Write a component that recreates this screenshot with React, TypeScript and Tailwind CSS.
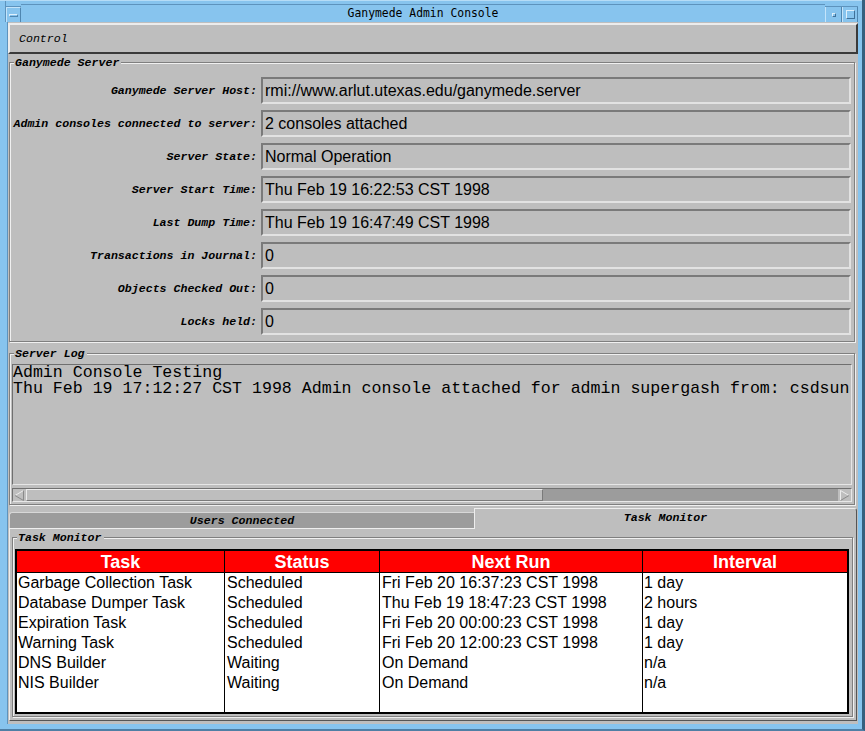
import React from "react";

const rows: [string, string][] = [
  ["Ganymede Server Host:", "rmi://www.arlut.utexas.edu/ganymede.server"],
  ["Admin consoles connected to server:", "2 consoles attached"],
  ["Server State:", "Normal Operation"],
  ["Server Start Time:", "Thu Feb 19 16:22:53 CST 1998"],
  ["Last Dump Time:", "Thu Feb 19 16:47:49 CST 1998"],
  ["Transactions in Journal:", "0"],
  ["Objects Checked Out:", "0"],
  ["Locks held:", "0"],
];

const tasks: string[][] = [
  ["Garbage Collection Task", "Scheduled", "Fri Feb 20 16:37:23 CST 1998", "1 day"],
  ["Database Dumper Task", "Scheduled", "Thu Feb 19 18:47:23 CST 1998", "2 hours"],
  ["Expiration Task", "Scheduled", "Fri Feb 20 00:00:23 CST 1998", "1 day"],
  ["Warning Task", "Scheduled", "Fri Feb 20 12:00:23 CST 1998", "1 day"],
  ["DNS Builder", "Waiting", "On Demand", "n/a"],
  ["NIS Builder", "Waiting", "On Demand", "n/a"],
];

const cols = [
  { title: "Task", w: "w-[208px] border-r border-black", pad: "pl-[1px]" },
  { title: "Status", w: "w-[155px] border-r border-black", pad: "pl-[2px]" },
  { title: "Next Run", w: "w-[263px] border-r border-black", pad: "pl-[2px]" },
  { title: "Interval", w: "flex-1", pad: "pl-[1px]" },
];

function Field({ label, value }: { label: string; value: string }) {
  return (
    <div className="flex items-center h-[27px]">
      <div className="w-[247px] text-right font-['Liberation_Mono',monospace] italic font-bold text-[11.6px] leading-[13px] text-black whitespace-nowrap">
        {label}
      </div>
      <div className="ml-[4px] flex-1 h-[27px] border-2 border-t-[#7a7a7a] border-l-[#7a7a7a] border-b-[#e2e2e2] border-r-[#e2e2e2] flex items-center pl-[2px] font-['Liberation_Sans',Arial,sans-serif] text-[16px] text-black whitespace-nowrap overflow-hidden">
        {value}
      </div>
    </div>
  );
}

export default function App() {
  return (
    <div className="w-[865px] h-[731px] bg-[#87c4ee] flex flex-col overflow-hidden relative border-r-[3px] border-r-[#35607f] border-b-[2px] border-b-[#4f7fa5]">
      {/* title bar */}
      <div className="h-[22px] flex shrink-0 border-t border-t-[#b6dcf6]">
        <div className="w-[6px] border-r border-r-[#5d93bd]" />
        <div className="flex flex-col">
          <div className="h-[6px] border-b border-b-[#5d93bd]" />
          <div className="w-[15px] h-[15px] border-t border-l border-t-[#c4e4fa] border-l-[#c4e4fa] border-r border-r-[#4f86b0] flex items-center justify-center">
            <div className="w-[9px] h-[3px] border-t border-l border-[#dff0fc] border-b border-r border-b-[#4f86b0] border-r-[#4f86b0]" />
          </div>
        </div>
        <div className="flex-1 flex flex-col">
          <div className="h-[6px] border-b border-b-[#5d93bd]" />
          <div className="flex-1 flex items-center justify-center font-['DejaVu_Sans_Mono',monospace] text-[11.4px] text-black">
            Ganymede Admin Console
          </div>
        </div>
        <div className="flex flex-col">
          <div className="h-[6px] border-b border-b-[#5d93bd]" />
          <div className="flex">
            <div className="w-[17px] h-[15px] border-l border-l-[#c4e4fa] border-r border-r-[#4f86b0] flex items-center justify-center">
              <div className="w-[4px] h-[4px] border-t border-l border-t-[#dff0fc] border-l-[#dff0fc] border-b border-r border-b-[#3f7099] border-r-[#3f7099]" />
            </div>
            <div className="w-[16px] h-[15px] border-l border-l-[#c4e4fa] border-r border-r-[#4f86b0] flex items-center justify-center">
              <div className="w-[9px] h-[9px] border-t border-l border-t-[#dff0fc] border-l-[#dff0fc] border-b border-r border-b-[#3f7099] border-r-[#3f7099]" />
            </div>
          </div>
        </div>
        <div className="w-[4px]" />
      </div>

      {/* content */}
      <div className="ml-[7px] mr-[4px] h-[702px] bg-[#bebebe] flex flex-col shrink-0 border-l border-l-[#5d93bd]">
        {/* Control menubar */}
        <div className="mt-[1px] h-[31px] flex items-center pl-[9px] border-t-2 border-l-2 border-t-[#ececec] border-l-[#ececec] border-b-2 border-r-2 border-b-[#3a3a3a] border-r-[#3a3a3a] font-['Liberation_Mono',monospace] italic text-[11.6px] text-black">
          Control
        </div>

        {/* Ganymede Server group */}
        <div className="relative mt-[8px] ml-[1px] mr-[3px] border border-[#7f7f7f] shadow-[inset_1px_1px_0_#f0f0f0,1px_1px_0_#f0f0f0] pt-[14px] pb-[6px] pr-[3px] flex flex-col gap-[6px]">
          <span className="absolute left-[4px] top-[-7px] bg-[#bebebe] pl-[1px] pr-[2px] font-['Liberation_Mono',monospace] italic font-bold text-[11.6px] leading-[13px] text-black">
            Ganymede Server
          </span>
          {rows.map(([l, v]) => (
            <Field key={l} label={l} value={v} />
          ))}
        </div>

        {/* Server Log group */}
        <div className="relative mt-[11px] ml-[1px] mr-[3px] border border-[#7f7f7f] shadow-[inset_1px_1px_0_#f0f0f0,1px_1px_0_#f0f0f0] pt-[10px] pb-[2px] pl-[2px] pr-[2px] flex flex-col">
          <span className="absolute left-[4px] top-[-7px] bg-[#bebebe] pl-[1px] pr-[2px] font-['Liberation_Mono',monospace] italic font-bold text-[11.6px] leading-[13px] text-black">
            Server Log
          </span>
          <div className="h-[121px] border border-t-[#6f6f6f] border-l-[#6f6f6f] border-b-[#e6e6e6] border-r-[#e6e6e6] overflow-hidden font-['Liberation_Mono',monospace] text-[16.6px] leading-[16px] text-black whitespace-pre">
            <div className="h-[16px]">Admin Console Testing</div>
            <div className="h-[16px]">Thu Feb 19 17:12:27 CST 1998 Admin console attached for admin supergash from: csdsun</div>
          </div>
          {/* scrollbar */}
          <div className="mt-[3px] h-[14px] flex border-t border-l border-t-[#707070] border-l-[#707070] border-b border-r border-b-[#e8e8e8] border-r-[#e8e8e8]">
            <div className="w-[13px] h-full flex items-center justify-center bg-[#bebebe]">
              <svg width="11" height="11" viewBox="0 0 11 11">
                <polyline points="9.5,0.5 1,5.5" stroke="#ececec" strokeWidth="1" fill="none" />
                <polyline points="1,5.5 9.5,10.5 9.5,0.5" stroke="#8a8a8a" strokeWidth="1" fill="none" />
              </svg>
            </div>
            <div className="w-[517px] h-full bg-[#bebebe] border-t border-l border-t-[#ececec] border-l-[#ececec] border-b border-r border-b-[#7a7a7a] border-r-[#7a7a7a]" />
            <div className="flex-1 h-full bg-[#9c9c9c]" />
            <div className="w-[13px] h-full flex items-center justify-center bg-[#bebebe]">
              <svg width="11" height="11" viewBox="0 0 11 11">
                <polyline points="1.5,10.5 1.5,0.5 10,5.5" stroke="#ececec" strokeWidth="1" fill="none" />
                <polyline points="10,5.5 1.5,10.5" stroke="#8a8a8a" strokeWidth="1" fill="none" />
              </svg>
            </div>
          </div>
        </div>

        {/* tabs */}
        <div className="mt-[3px] h-[21px] -mb-[1px] flex items-end ml-[1px] mr-[1px]">
          <div className="w-[465px] h-[17px] bg-[#9c9c9c] border-t border-l border-t-[#d8d8d8] border-l-[#d8d8d8] rounded-tl-[3px] flex items-start justify-center pt-[1px] font-['Liberation_Mono',monospace] italic font-bold text-[11.6px] leading-[13px] text-black">
            Users Connected
          </div>
          <div className="relative flex-1 h-[21px] bg-[#bebebe] border-t border-l border-t-[#eeeeee] border-l-[#eeeeee] border-r border-r-[#555555] rounded-tr-[3px] flex items-start justify-center pt-[2px] font-['Liberation_Mono',monospace] italic font-bold text-[11.6px] leading-[13px] text-black">
            Task Monitor
          </div>
        </div>

        {/* tab panel */}
        <div className="ml-[1px] mr-[1px] h-[193px] border-t border-l border-t-[#eeeeee] border-l-[#eeeeee] border-b border-r border-b-[#555555] border-r-[#555555] pt-[8px] pb-[3px] pl-[2px] pr-[3px]">
          <div className="relative h-[180px] border border-[#7f7f7f] shadow-[inset_1px_1px_0_#f0f0f0,1px_1px_0_#f0f0f0] pt-[11px] pb-[2px] pl-[2px] pr-[3px]">
            <span className="absolute left-[4px] top-[-7px] bg-[#bebebe] pl-[1px] pr-[2px] font-['Liberation_Mono',monospace] italic font-bold text-[11.6px] leading-[13px] text-black">
              Task Monitor
            </span>
            <div className="h-[165px] border-2 border-black bg-white flex font-['Liberation_Sans',Arial,sans-serif]">
              {cols.map((c, ci) => (
                <div key={c.title} className={`${c.w} flex flex-col`}>
                  <div className="h-[22px] bg-[#ff0000] border-b border-black flex items-center justify-center text-white font-bold text-[18px] leading-[20px]">
                    {c.title}
                  </div>
                  {tasks.map((t, ri) => (
                    <div key={ri} className={`${c.pad} h-[20px] leading-[20px] text-[16px] text-black whitespace-nowrap overflow-hidden`}>
                      {t[ci]}
                    </div>
                  ))}
                </div>
              ))}
            </div>
          </div>
        </div>
      </div>
    </div>
  );
}
